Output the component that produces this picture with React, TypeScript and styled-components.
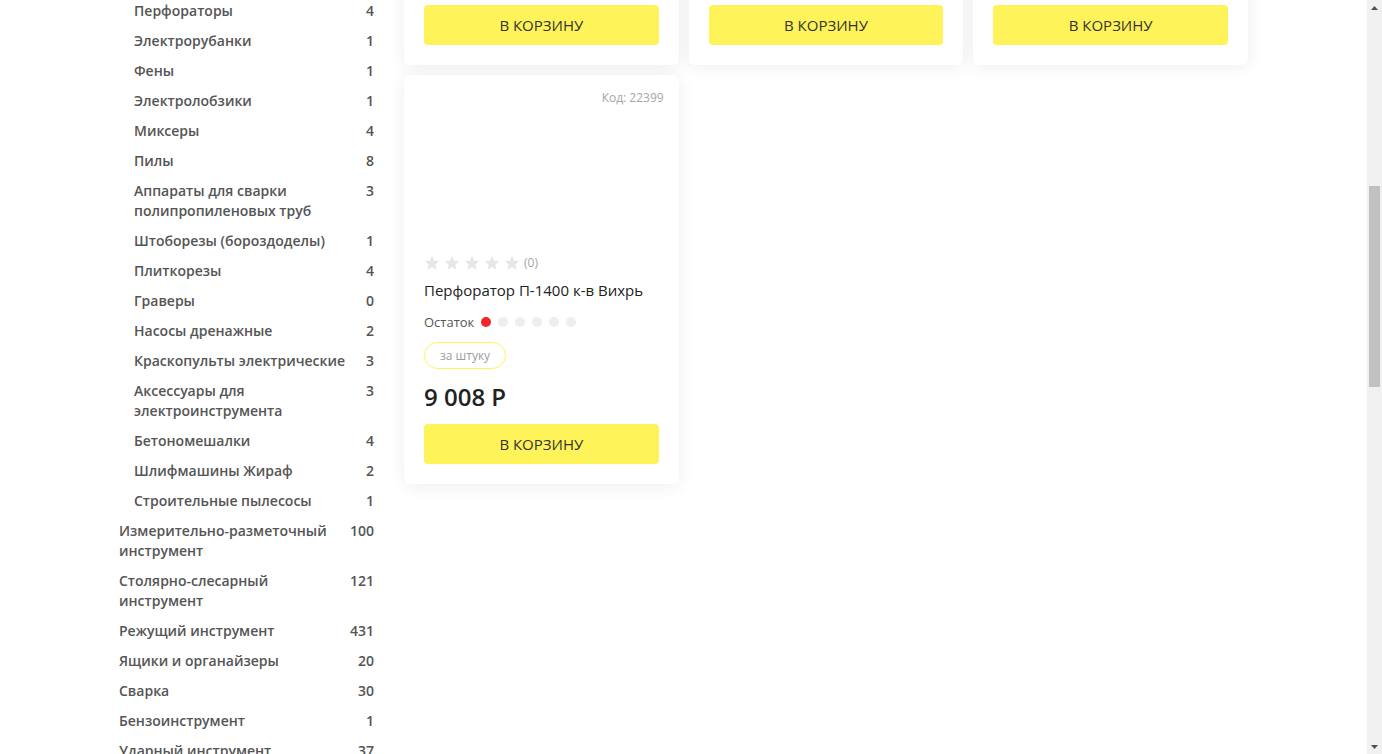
import React from "react";
import styled, { createGlobalStyle } from "styled-components";

const Global = createGlobalStyle`
  html, body { margin: 0; padding: 0; height: 100%; overflow: hidden; background: #fff; }
  body { font-family: "Open Sans", "Noto Sans", sans-serif; }
  * { box-sizing: border-box; }
`;

const Screen = styled.div`
  display: flex;
  width: 100vw;
  height: 100vh;
  overflow: hidden;
`;

const Main = styled.main`
  flex: 1;
  display: flex;
  align-items: flex-start;
  gap: 30px;
  padding-left: 119px;
  overflow: hidden;
`;

const Sidebar = styled.aside`
  width: 255px;
  flex: none;
  display: flex;
  flex-direction: column;
  gap: 10px;
  padding-top: 1px;
`;

const CatRow = styled.div<{ $sub?: boolean }>`
  display: flex;
  justify-content: space-between;
  align-items: flex-start;
  padding-left: ${(p) => (p.$sub ? "15px" : "0")};
  font-size: 14px;
  line-height: 20px;
  font-weight: 600;
  color: #555;
`;

const CatName = styled.span`
  max-width: 225px;
`;

const CatCount = styled.span`
  text-align: right;
`;

const Products = styled.section`
  width: 844px;
  flex: none;
  display: grid;
  grid-template-columns: repeat(3, 1fr);
  gap: 10px;
  margin-top: -344px;
`;

const Card = styled.div`
  background: #fff;
  border-radius: 6px;
  box-shadow: 0 2px 18px rgba(0, 0, 0, 0.07);
  padding: 14px 20px 20px;
  display: flex;
  flex-direction: column;
`;

const Code = styled.div`
  margin: 1px -5px 0 0;
  font-size: 12px;
  line-height: 16px;
  color: #a6a6a6;
  text-align: right;
`;

const ImageArea = styled.div`
  height: 149px;
`;

const Rating = styled.div`
  display: flex;
  align-items: center;
  gap: 4px;
  height: 16px;
`;

const Votes = styled.span`
  font-size: 12px;
  color: #a6a6a6;
  line-height: 16px;
`;

const Title = styled.div`
  margin-top: 9px;
  font-size: 15px;
  line-height: 20px;
  color: #222;
`;

const Stock = styled.div`
  margin-top: 12px;
  display: flex;
  align-items: center;
  gap: 6px;
  font-size: 13px;
  line-height: 20px;
  color: #555;
`;

const Dots = styled.div`
  display: flex;
  gap: 7px;
  margin-left: 1px;
`;

const Dot = styled.span<{ $on?: boolean }>`
  width: 10px;
  height: 10px;
  border-radius: 50%;
  background: ${(p) => (p.$on ? "#f0262c" : "#eeeeee")};
`;

const Unit = styled.div`
  margin-top: 10px;
  align-self: flex-start;
  height: 27px;
  padding: 0 15px;
  border: 1px solid #fff35a;
  border-radius: 14px;
  font-size: 12px;
  line-height: 25px;
  color: #9d9d9d;
`;

const Price = styled.div`
  margin-top: 12px;
  font-size: 24px;
  line-height: 32px;
  font-weight: 600;
  color: #222;
`;

const BuyButton = styled.button`
  margin-top: 11px;
  height: 40px;
  width: 100%;
  border: none;
  border-radius: 4px;
  background: #fff35a;
  color: #333;
  font-family: "Open Sans", sans-serif;
  font-size: 15px;
  text-transform: uppercase;
  cursor: pointer;
`;

const Scrollbar = styled.div`
  width: 15px;
  flex: none;
  height: 100vh;
  background: #f1f1f1;
  display: flex;
  flex-direction: column;
  align-items: center;
`;

const Arrow = styled.div`
  height: 15px;
  width: 15px;
  display: flex;
  align-items: center;
  justify-content: center;
`;

const Track = styled.div`
  flex: 1;
  width: 100%;
  padding: 171px 2px 0;
`;

const Thumb = styled.div`
  height: 201px;
  background: #c1c1c1;
`;

const Star = () => (
  <svg width="16" height="16" viewBox="0 0 24 24">
    <path
      d="M12 1.5l3.1 7.1 7.7.7-5.8 5.1 1.7 7.6L12 18l-6.7 4 1.7-7.6-5.8-5.1 7.7-.7z"
      fill="#e6e6e6"
    />
  </svg>
);

type Cat = { name: string; count: number; sub?: boolean };

const cats: Cat[] = [
  { name: "Перфораторы", count: 4, sub: true },
  { name: "Электрорубанки", count: 1, sub: true },
  { name: "Фены", count: 1, sub: true },
  { name: "Электролобзики", count: 1, sub: true },
  { name: "Миксеры", count: 4, sub: true },
  { name: "Пилы", count: 8, sub: true },
  { name: "Аппараты для сварки полипропиленовых труб", count: 3, sub: true },
  { name: "Штоборезы (бороздоделы)", count: 1, sub: true },
  { name: "Плиткорезы", count: 4, sub: true },
  { name: "Граверы", count: 0, sub: true },
  { name: "Насосы дренажные", count: 2, sub: true },
  { name: "Краскопульты электрические", count: 3, sub: true },
  { name: "Аксессуары для электроинструмента", count: 3, sub: true },
  { name: "Бетономешалки", count: 4, sub: true },
  { name: "Шлифмашины Жираф", count: 2, sub: true },
  { name: "Строительные пылесосы", count: 1, sub: true },
  { name: "Измерительно-разметочный инструмент", count: 100 },
  { name: "Столярно-слесарный инструмент", count: 121 },
  { name: "Режущий инструмент", count: 431 },
  { name: "Ящики и органайзеры", count: 20 },
  { name: "Сварка", count: 30 },
  { name: "Бензоинструмент", count: 1 },
  { name: "Ударный инструмент", count: 37 },
];

type Product = { code: string; title: string; price: string; stock: number };

const products: Product[] = [
  { code: "22401", title: "Перфоратор П-1200 к-в Вихрь", price: "8 450 Р", stock: 2 },
  { code: "22400", title: "Перфоратор П-1000 к-в Вихрь", price: "7 320 Р", stock: 2 },
  { code: "22398", title: "Перфоратор П-800 к-в Вихрь", price: "6 190 Р", stock: 1 },
  { code: "22399", title: "Перфоратор П-1400 к-в Вихрь", price: "9 008 Р", stock: 1 },
];

const ProductCard = ({ p }: { p: Product }) => (
  <Card>
    <Code>Код: {p.code}</Code>
    <ImageArea />
    <Rating>
      {[0, 1, 2, 3, 4].map((i) => (
        <Star key={i} />
      ))}
      <Votes>(0)</Votes>
    </Rating>
    <Title>{p.title}</Title>
    <Stock>
      Остаток
      <Dots>
        {[0, 1, 2, 3, 4, 5].map((i) => (
          <Dot key={i} $on={i < p.stock && i === 0} />
        ))}
      </Dots>
    </Stock>
    <Unit>за штуку</Unit>
    <Price>{p.price}</Price>
    <BuyButton>В корзину</BuyButton>
  </Card>
);

export default function App() {
  return (
    <>
      <Global />
      <Screen>
        <Main>
          <Sidebar>
            {cats.map((c) => (
              <CatRow key={c.name} $sub={c.sub}>
                <CatName>{c.name}</CatName>
                <CatCount>{c.count}</CatCount>
              </CatRow>
            ))}
          </Sidebar>
          <Products>
            {products.map((p) => (
              <ProductCard key={p.code} p={p} />
            ))}
          </Products>
        </Main>
        <Scrollbar>
          <Arrow>
            <svg width="7" height="4" viewBox="0 0 7 4">
              <path d="M3.5 0L7 4H0z" fill="#505050" />
            </svg>
          </Arrow>
          <Track>
            <Thumb />
          </Track>
          <Arrow>
            <svg width="7" height="4" viewBox="0 0 7 4">
              <path d="M0 0h7L3.5 4z" fill="#505050" />
            </svg>
          </Arrow>
        </Scrollbar>
      </Screen>
    </>
  );
}
